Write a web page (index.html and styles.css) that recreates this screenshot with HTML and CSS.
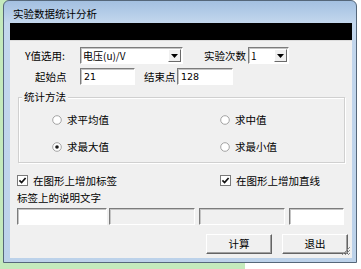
FILE: index.html
```html
<!DOCTYPE html>
<html lang="zh-CN">
<head>
    <meta charset="UTF-8">
    <title>实验数据统计分析</title>
    <link rel="stylesheet" href="styles.css">
</head>
<body>
    <div class="window">
        <div class="titlebar">实验数据统计分析</div>
        <div class="blackbar"></div>
        <div class="client">
            <!-- 第一行：Y值与次数 -->
            <div class="row row-select">
                <span class="lbl lbl-y">Y值选用:</span>
                <div class="combo combo-y">
                    <span class="combo-text">电压(u)/V</span>
                    <span class="combo-btn"><svg width="7" height="4" viewBox="0 0 7 4"><path d="M0 0h7L3.5 4z" fill="#000"/></svg></span>
                </div>
                <span class="lbl lbl-n">实验次数</span>
                <div class="combo combo-n">
                    <span class="combo-text">1</span>
                    <span class="combo-btn"><svg width="7" height="4" viewBox="0 0 7 4"><path d="M0 0h7L3.5 4z" fill="#000"/></svg></span>
                </div>
            </div>

            <!-- 第二行：起止点 -->
            <div class="row row-range">
                <span class="lbl lbl-start">起始点</span>
                <div class="field field-start">21</div>
                <span class="lbl lbl-end">结束点</span>
                <div class="field field-end">128</div>
            </div>

            <!-- 统计方法 -->
            <div class="group">
                <div class="legend">统计方法</div>
                <div class="radios">
                    <div class="radio"><svg width="10" height="10" viewBox="0 0 10 10"><circle cx="5" cy="5" r="4.3" fill="#fff" stroke="#a3a3a3"/></svg><span>求平均值</span></div>
                    <div class="radio"><svg width="10" height="10" viewBox="0 0 10 10"><circle cx="5" cy="5" r="4.3" fill="#fff" stroke="#a3a3a3"/></svg><span>求中值</span></div>
                    <div class="radio"><svg width="10" height="10" viewBox="0 0 10 10"><circle cx="5" cy="5" r="4.3" fill="#fff" stroke="#a3a3a3"/><circle cx="5" cy="5" r="1.8" fill="#1a1a1a"/></svg><span>求最大值</span></div>
                    <div class="radio"><svg width="10" height="10" viewBox="0 0 10 10"><circle cx="5" cy="5" r="4.3" fill="#fff" stroke="#a3a3a3"/></svg><span>求最小值</span></div>
                </div>
            </div>

            <!-- 复选框 -->
            <div class="row row-check">
                <div class="check check-label"><svg width="11" height="11" viewBox="0 0 11 11"><rect x="0.5" y="0.5" width="10" height="10" fill="#fff" stroke="#7a7a7a"/><path d="M2.4 5.4l2.2 2.2 4-4.6" fill="none" stroke="#111" stroke-width="1.7"/></svg><span>在图形上增加标签</span></div>
                <div class="check"><svg width="11" height="11" viewBox="0 0 11 11"><rect x="0.5" y="0.5" width="10" height="10" fill="#fff" stroke="#7a7a7a"/><path d="M2.4 5.4l2.2 2.2 4-4.6" fill="none" stroke="#111" stroke-width="1.7"/></svg><span>在图形上增加直线</span></div>
            </div>

            <div class="caption">标签上的说明文字</div>
            <div class="row row-texts">
                <div class="field t1"></div>
                <div class="field t2 disabled"></div>
                <div class="field t3 disabled"></div>
                <div class="field t4"></div>
            </div>

            <div class="row row-buttons">
                <div class="btn">计算</div>
                <div class="btn">退出</div>
            </div>

            <svg class="grip" width="10" height="10" viewBox="0 0 10 10">
                <path d="M9 1L1 9M9 4L4 9M9 7L7 9" stroke="#8a8a8a" stroke-width="1"/>
            </svg>
        </div>
    </div>
</body>
</html>
```

FILE: styles.css
```css
body {
    margin: 0;
    font-family: "Noto Sans CJK SC", "DejaVu Sans", sans-serif;
    font-size: 10.5px;
    color: #000;
    background: linear-gradient(to right, #c4eabc 245px, #fff 245px);
    height: 269px;
    overflow: hidden;
}
.window {
    margin-left: 3px;
    width: 342px;
    height: 261px;
    border: 1px solid #55677a;
    border-radius: 6px 6px 0 0;
    background: linear-gradient(#a3c0e1, #c3d7ed 22px, #bcd2ea);
    padding: 0 4px 0 6px;
}
.titlebar {
    height: 22px;
    line-height: 25px;
    padding-left: 3px;
}
.blackbar {
    height: 17px;
    background: #000;
}
.client {
    position: relative;
    height: 218px;
    background: #f0f0f0;
    border-top: 1px solid #dcdcdc;
    box-sizing: border-box;
}
.row {
    display: flex;
    align-items: center;
}
.lbl {
    line-height: 14px;
}

/* 第一行 */
.row-select {
    height: 17px;
    margin-top: 6px;
    padding-left: 15px;
}
.lbl-y {
    width: 55px;
}
.lbl-n {
    margin-left: 21px;
    width: 44px;
}
.combo {
    display: flex;
    height: 17px;
    box-sizing: border-box;
    background: #fff;
    border-top: 1px solid #7c7c7c;
    border-left: 1px solid #7c7c7c;
    border-right: 1px solid #fff;
    border-bottom: 1px solid #fff;
    box-shadow: inset 1px 1px 0 #c4c4c4;
}
.combo-y {
    width: 103px;
}
.combo-n {
    width: 41px;
}
.combo-text {
    flex: 1;
    padding-left: 2px;
    line-height: 15px;
    font-size: 10px;
    font-family: "Noto Sans CJK SC", "DejaVu Sans Mono", monospace;
}
.combo-btn {
    width: 13px;
    margin: 1px;
    display: flex;
    align-items: center;
    justify-content: center;
    background: #f0f0f0;
    border-top: 1px solid #fff;
    border-left: 1px solid #fff;
    border-right: 1px solid #6a6a6a;
    border-bottom: 1px solid #6a6a6a;
    box-sizing: border-box;
}

/* 第二行 */
.row-range {
    height: 17px;
    margin-top: 4px;
    padding-left: 25px;
}
.lbl-start {
    width: 45px;
}
.lbl-end {
    margin-left: 9px;
    width: 33px;
}
.field {
    height: 17px;
    box-sizing: border-box;
    background: #fff;
    border-top: 1px solid #7c7c7c;
    border-left: 1px solid #7c7c7c;
    border-right: 1px solid #fff;
    border-bottom: 1px solid #fff;
    box-shadow: inset 1px 1px 0 #c4c4c4;
    padding-left: 3px;
    line-height: 15px;
    font-family: "DejaVu Sans", sans-serif;
    font-size: 9.5px;
}
.field-start {
    width: 55px;
}
.field-end {
    width: 56px;
}

/* 统计方法 */
.group {
    margin: 12px 7px 0 8px;
    height: 66px;
    box-sizing: border-box;
    border: 1px solid #d0d0d0;
    box-shadow: inset 1px 1px 0 #fff, 1px 1px 0 #fff;
}
.legend {
    width: fit-content;
    margin: -7px 0 0 3px;
    padding: 0 2px;
    line-height: 12px;
    background: #f0f0f0;
}
.radios {
    display: grid;
    grid-template-columns: 168px 1fr;
    row-gap: 13px;
    margin-top: 10px;
    padding-left: 33px;
}
.radio {
    display: flex;
    align-items: center;
    gap: 5px;
    height: 14px;
}
.radio span {
    line-height: 14px;
}

/* 复选框 */
.row-check {
    height: 14px;
    margin-top: 10px;
    padding-left: 7px;
}
.check {
    display: flex;
    align-items: center;
    gap: 5px;
}
.check-label {
    width: 203px;
}
.caption {
    margin-top: 4px;
    padding-left: 7px;
    line-height: 14px;
}
.row-texts {
    margin-top: 3px;
    padding-left: 7px;
}
.t1 {
    width: 90px;
}
.t2 {
    width: 86px;
    margin-left: 2px;
}
.t3 {
    width: 86px;
    margin-left: 4px;
}
.t4 {
    width: 55px;
    margin-left: 4px;
}
.field.disabled {
    background: #f0f0f0;
}

/* 按钮 */
.row-buttons {
    margin-top: 9px;
    padding-left: 196px;
    gap: 10px;
}
.btn {
    width: 66px;
    height: 20px;
    box-sizing: border-box;
    text-align: center;
    line-height: 18px;
    background: #f0f0f0;
    border-top: 1px solid #fff;
    border-left: 1px solid #fff;
    border-right: 1px solid #646464;
    border-bottom: 1px solid #646464;
    box-shadow: inset -1px -1px 0 #a0a0a0;
}
.grip {
    position: absolute;
    right: 1px;
    bottom: 2px;
}
```
